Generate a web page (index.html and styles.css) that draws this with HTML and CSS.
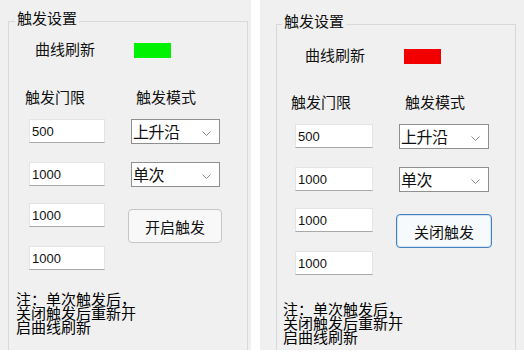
FILE: index.html
```html
<html>
<head>
	<title>触发设置</title>
	<link rel="stylesheet" href="styles.css">
</head>
<body>
	<div class="screens">
		<div class="panel">
			<fieldset class="group">
				<legend>触发设置</legend>
				<div class="refresh">
					<span>曲线刷新</span>
					<span class="swatch swatchOn"></span>
				</div>
				<div class="form">
					<div class="label">触发门限</div>
					<div class="label modeLabel">触发模式</div>
					<input class="field" type="text" value="500">
					<div class="combo"><span>上升沿</span><svg width="9" height="5" viewBox="0 0 9 5"><polyline points="0.5,0.5 4.5,4.5 8.5,0.5" fill="none" stroke="#8a8a8a" stroke-width="1"/></svg></div>
					<input class="field" type="text" value="1000">
					<div class="combo"><span>单次</span><svg width="9" height="5" viewBox="0 0 9 5"><polyline points="0.5,0.5 4.5,4.5 8.5,0.5" fill="none" stroke="#8a8a8a" stroke-width="1"/></svg></div>
					<input class="field" type="text" value="1000">
					<button class="trigger">开启触发</button>
					<input class="field" type="text" value="1000">
				</div>
				<p class="note">注：单次触发后，<br>关闭触发后重新开<br>启曲线刷新</p>
			</fieldset>
		</div>
		<div class="panel panelClosed">
			<fieldset class="group">
				<legend>触发设置</legend>
				<div class="refresh">
					<span>曲线刷新</span>
					<span class="swatch swatchOff"></span>
				</div>
				<div class="form">
					<div class="label">触发门限</div>
					<div class="label modeLabel">触发模式</div>
					<input class="field" type="text" value="500">
					<div class="combo"><span>上升沿</span><svg width="9" height="5" viewBox="0 0 9 5"><polyline points="0.5,0.5 4.5,4.5 8.5,0.5" fill="none" stroke="#8a8a8a" stroke-width="1"/></svg></div>
					<input class="field" type="text" value="1000">
					<div class="combo"><span>单次</span><svg width="9" height="5" viewBox="0 0 9 5"><polyline points="0.5,0.5 4.5,4.5 8.5,0.5" fill="none" stroke="#8a8a8a" stroke-width="1"/></svg></div>
					<input class="field" type="text" value="1000">
					<button class="trigger triggerActive">关闭触发</button>
					<input class="field" type="text" value="1000">
				</div>
				<p class="note">注：单次触发后，<br>关闭触发后重新开<br>启曲线刷新</p>
			</fieldset>
		</div>
	</div>
</body>
</html>
```

FILE: styles.css
```css
body {
	margin: 0;
	background: white;
	font-family: "Noto Sans CJK SC", "Noto Sans", sans-serif;
	color: #111;
}
.screens {
	display: flex;
	gap: 9px;
}
.panel {
	width: 251px;
	height: 350px;
	background: #f0f0f0;
	padding: 8px 0 0 8px;
	box-sizing: border-box;
	overflow: hidden;
}
.group {
	box-sizing: border-box;
	width: 240px;
	height: 400px;
	min-inline-size: 0;
	margin: 0;
	padding: 0;
	border: 1px solid #d9d9d9;
}
.group legend {
	font-size: 15px;
	line-height: 20px;
	padding: 0 2px 6px 2px;
	margin-left: 6px;
}
.refresh {
	display: flex;
	align-items: center;
	gap: 39px;
	margin: 5px 0 0 26px;
	font-size: 15px;
	line-height: 20px;
}
.swatch {
	width: 37px;
	height: 15px;
	margin-top: 2px;
}
.swatchOn {
	background: #00f200;
}
.swatchOff {
	background: #f20000;
}
.form {
	display: grid;
	grid-template-columns: 106px 1fr;
	grid-template-rows: 32px 43px 41px 43px 24px;
	align-items: start;
	margin: 28px 0 0 16px;
}
.label {
	font-size: 15px;
	line-height: 20px;
}
.modeLabel {
	margin-left: 5px;
}
.field {
	box-sizing: border-box;
	width: 76px;
	height: 24px;
	margin: 0 0 0 4px;
	padding: 0 2px;
	border: 1px solid #e4e4e4;
	border-bottom: 1px solid #a9a9a9;
	background: white;
	font-family: "Liberation Sans", Arial, sans-serif;
	font-size: 13px;
	line-height: 22px;
	color: #111;
	outline: none;
}
.combo {
	box-sizing: border-box;
	width: 89px;
	height: 25px;
	display: flex;
	justify-content: space-between;
	align-items: flex-start;
	padding: 0 8px 0 1px;
	border: 1px solid #8f8f8f;
	background: white;
	font-size: 16px;
	line-height: 23px;
	letter-spacing: -0.5px;
}
.combo svg {
	margin-top: 11px;
}
.trigger {
	box-sizing: border-box;
	width: 94px;
	height: 34px;
	margin: 6px 0 0 -3px;
	padding: 0;
	border: 1px solid #c6c6c6;
	border-radius: 4px;
	background: #f8f8f8;
	font-family: "Noto Sans CJK SC", "Noto Sans", sans-serif;
	font-size: 15px;
	color: #111;
}
.triggerActive {
	border-color: #4680bd;
	box-shadow: inset 0 0 0 1px #cfe3f5;
	background: #f6fafd;
}
.note {
	margin: 22px 0 0 7px;
	font-size: 15px;
	line-height: 14px;
	color: #000;
}

.panelClosed {
	width: 264px;
	padding: 11px 0 0 16px;
}
.panelClosed .group legend {
	margin-left: 5px;
}
.panelClosed .refresh {
	margin: 8px 0 0 28px;
}
.panelClosed .form {
	grid-template-columns: 108px 1fr;
	margin: 27px 0 0 14px;
}
.panelClosed .modeLabel {
	margin-left: 6px;
}
.panelClosed .field {
	width: 78px;
}
.panelClosed .combo {
	width: 90px;
}
.panelClosed .trigger {
	width: 96px;
	margin-top: 6px;
}
.panelClosed .note {
	margin: 27px 0 0 6px;
}
```
